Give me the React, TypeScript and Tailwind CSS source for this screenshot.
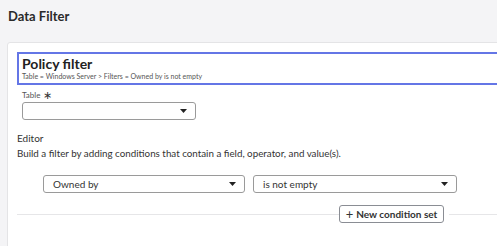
import React from "react";

function Caret() {
  return (
    <svg width="7" height="4" viewBox="0 0 7 4" className="shrink-0">
      <path d="M0 0 H7 L3.5 4 Z" fill="#222" />
    </svg>
  );
}

function Select({ w, label, textPad }: { w: string; label?: string; textPad?: string }) {
  return (
    <div
      className={`${w} h-[18px] flex items-center justify-between rounded-[3px] border border-[#9a9a9a] bg-white pr-[8px] ${textPad ?? "pl-[9px]"}`}
    >
      <span className="text-[10px] leading-none text-[#333]">{label}</span>
      <Caret />
    </div>
  );
}

export default function App() {
  return (
    <div
      className="w-[497px] h-[246px] overflow-hidden bg-[#f4f4f6] text-[#222]"
      style={{ fontFamily: "Lato, 'Open Sans', sans-serif" }}
    >
      <div className="pl-[8px] pt-[9px] h-[42px]">
        <h1 className="text-[13px] leading-[15px] font-bold text-[#2a2a2a]">Data Filter</h1>
      </div>
      <div className="ml-[7px] w-[540px] h-[220px] bg-white border border-[#e4e4e6] rounded-[3px] pt-[9px] pl-[9px]">
        <div className="border-2 border-[#6476e6] h-[33px] pl-[3px] pt-[1px]">
          <div className="text-[14px] leading-[17px] font-bold text-[#222]">Policy filter</div>
          <div className="text-[7px] leading-[9px] text-[#555]">
            Table = Windows Server &gt; Filters = Owned by is not empty
          </div>
        </div>
        <div className="pl-[5px] pt-[5px]">
          <div className="flex items-center gap-[3px] text-[8px] leading-[10px] text-[#555]">
            <span>Table</span>
            <span className="text-[11px] leading-[10px] text-[#333]">∗</span>
          </div>
          <div className="mt-[2px]">
            <Select w="w-[174px]" />
          </div>
        </div>
        <div className="mt-[12px] text-[10px] leading-[12px] text-[#333]">Editor</div>
        <div className="mt-[3px] text-[9.8px] leading-[12px] text-[#333]">
          Build a filter by adding conditions that contain a field, operator, and value(s).
        </div>
        <div className="mt-[16px] pl-[26px] flex gap-[8px]">
          <Select w="w-[202px]" label="Owned by" />
          <Select w="w-[204px]" label="is not empty" />
        </div>
        <div className="mt-[12px] flex items-center">
          <div className="w-[322px] h-px bg-[#e6e6e8]" />
          <div className="h-[18px] w-[105px] flex items-center justify-center gap-[3px] rounded-[3px] border border-[#8a8d94] bg-white text-[10px] font-bold text-[#333]">
            <span className="text-[13px] leading-none font-normal">+</span>
            <span className="leading-none">New condition set</span>
          </div>
          <div className="ml-[5px] flex-1 h-px bg-[#e6e6e8]" />
        </div>
      </div>
    </div>
  );
}
